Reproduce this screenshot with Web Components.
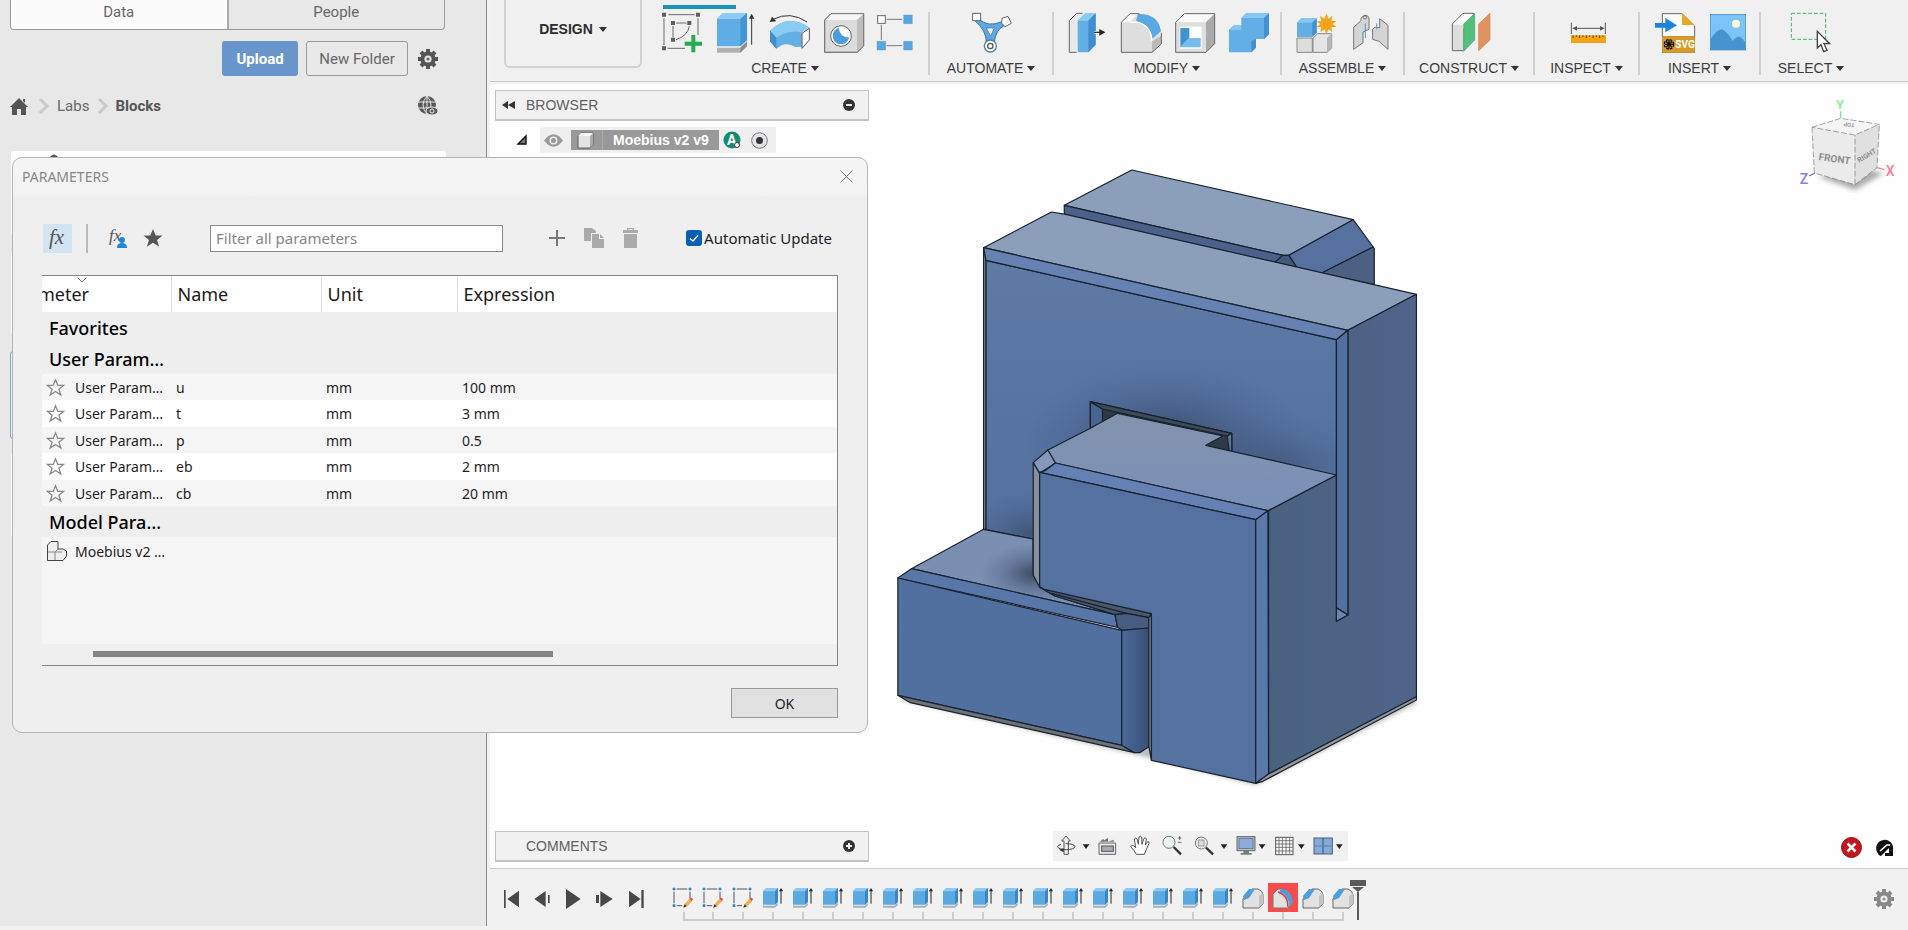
<!DOCTYPE html>
<html lang="en">
<head>
<meta charset="utf-8">
<title>Moebius v2 v9</title>
<style>
  body { margin: 0; background: #f1f1f1; font-family: "Liberation Sans", Arial, sans-serif; color: #333; }
</style>
</head>
<body>
<cad-app></cad-app>
<script>
const define = (name, html, setup) => customElements.define(name, class extends HTMLElement {
  connectedCallback() {
    if (this.shadowRoot) return;
    const root = this.attachShadow({ mode: 'open' });
    const t = document.createElement('template');
    t.innerHTML = typeof html === 'function' ? html(this) : html;
    root.append(t.content.cloneNode(true));
    if (setup) setup(this, root);
  }
});
const base = `<style>
  *{box-sizing:border-box}
  button{font:inherit;color:inherit;background:none;border:0;padding:0;margin:0;display:block}
  svg{display:block;overflow:visible}
</style>`;

/* ---------- toolbar icons, drawn on a grid of three units per pixel ---------- */
const icons = {
  sketch: ['540 36', `<g stroke="#6a6a6a" stroke-width="3" fill="none"><path d="M562 44H640M549 55V135M651 55V105M560 145H612M585 69H617M576 78V112M625 78Q620 108 585 119"/></g>
    <g fill="#5f5f5f"><path d="M543 38h12v12h-12zM645 38h12v12h-12zM543 139h12v12h-12zM570 63h12v12h-12zM619 63h12v12h-12zM570 113h12v12h-12z"/></g>
    <path d="M631 105h12v20h20v12h-20v20h-12v-20h-20v-12h20z" fill="#25ab50"/>`],
  extrude: ['702 36', `<path d="M708 57L726 39H798V120L778 139H708Z" fill="#5fade4"/><path d="M708 57L726 39H798L778 57Z" fill="#8cccf5"/><path d="M778 57L798 39V120L778 139Z" fill="#4296d6"/>
    <path d="M708 143H778L798 124V138L778 158H708Z" fill="#b1b1b1"/><path d="M778 143L798 124V138L778 158Z" fill="#8e8e8e"/><path d="M812 134V50" stroke="#333" stroke-width="3"/><path d="M804 56L812 41L820 56Z" fill="#333"/>`],
  revolve: ['864 36', `<path d="M867 92Q920 40 984 82L962 97V140L944 141Q920 128 902 136L886 146L867 124Z" fill="#62aee5"/><path d="M867 92Q920 40 984 82L962 97Q925 88 886 113Z" fill="#8acbf5"/><path d="M867 92L886 113V146L867 124Z" fill="#3f8fce"/>
    <path d="M963 100L985 85V120L963 145Z" fill="#fff" stroke="#555" stroke-width="3"/><path d="M876 58Q928 32 978 66" fill="none" stroke="#333" stroke-width="3"/><path d="M866 66L873 50L886 64Z" fill="#333"/>`],
  hole: ['1026 36', `<path d="M1031 60L1050 41H1148V138L1128 157H1031Z" fill="#dcdcdc" stroke="#777" stroke-width="3"/><path d="M1031 60L1050 41H1148L1128 60Z" fill="#f6f6f6"/><path d="M1128 60L1148 41V138L1128 157Z" fill="#bdbdbd"/><path d="M1031 60L1050 41H1148V138L1128 157H1031Z" fill="none" stroke="#777" stroke-width="3"/>
    <circle cx="1080" cy="108" r="31" fill="#fff" stroke="#666" stroke-width="3"/><circle cx="1080" cy="108" r="25" fill="#4b9ddc"/><path d="M1080 83A25 25 0 0 1 1105 112Q1078 114 1073 84Z" fill="#fff"/>`],
  pattern: ['1188 36', `<path d="M1217 58H1264M1201 74V120M1217 137H1264" stroke="#777" stroke-width="3"/><rect x="1190" y="47" width="23" height="23" fill="#fff" stroke="#666" stroke-width="3"/><path d="M1268 45h26v26h-26zM1188 124h26v26h-26zM1268 124h26v26h-26z" fill="#5aa6de" stroke="#4b8fc4" stroke-width="1"/>`],
  automate: ['210 36', `<path d="M234 58Q262 82 300 66L308 78Q284 90 280 126L256 126Q256 92 222 62Z" fill="#5fa8e0" stroke="#3f74a0" stroke-width="3"/><path d="M256 84H280L269 108Z" fill="#f4f4f4" stroke="#3f74a0" stroke-width="2"/>
    <rect x="215" y="40" width="24" height="22" fill="#fff" stroke="#666" stroke-width="3"/><path d="M303 55L321 49L331 70L312 80L302 70Z" fill="#fff" stroke="#666" stroke-width="3"/><circle cx="268" cy="138" r="18" fill="#fff" stroke="#4e7fa8" stroke-width="4"/><circle cx="268" cy="138" r="8" fill="none" stroke="#555" stroke-width="4"/>`],
  press: ['495 36', `<path d="M530 157H508V62L530 40H548" fill="#e9e9e9" stroke="#666" stroke-width="3"/><path d="M533 62L556 40H587V134L565 157H533Z" fill="#62aee5"/><path d="M533 62L556 40H587L565 62Z" fill="#8acbf5"/><path d="M565 62L587 40V134L565 157Z" fill="#3d8fd0"/><path d="M582 97H600" stroke="#fff" stroke-width="8"/><path d="M582 97H602" stroke="#333" stroke-width="4"/><path d="M598 87L616 97L598 107Z" fill="#222"/>`],
  fillet: ['657 36', `<path d="M664 67L690 41H718L784 108V132L756 157H664Z" fill="#dedede"/><path d="M664 67L690 41H714L690 67Z" fill="#f8f8f8"/><path d="M756 124L784 108V132L756 157Z" fill="#bbb"/><path d="M714 42Q775 40 783 94L757 116Q754 76 708 62Z" fill="#5aa9e2"/><path d="M718 41H690L664 67V157H756L784 132V98" fill="none" stroke="#666" stroke-width="3"/><path d="M690 67Q750 62 756 122" fill="none" stroke="#fff" stroke-width="4"/>`],
  shell: ['819 36', `<path d="M827 67L853 41H944V131L918 157H827Z" fill="#dedede"/><path d="M827 67L853 41H944L918 67Z" fill="#fafafa"/><path d="M918 67L944 41V131L918 157Z" fill="#aaa"/><path d="M827 67L853 41H944V131L918 157H827Z" fill="none" stroke="#666" stroke-width="3"/><rect x="839" y="80" width="66" height="66" fill="#fff"/><path d="M841 84H868V114L841 142Z" fill="#4093d2"/><path d="M868 114H902V142H841Z" fill="#74bdee"/>`],
  combine: ['981 36', `<path d="M987 90L1001 76H1024V54L1038 40H1107V102L1092 117H1068V143L1054 157H987Z" fill="#62aee5"/><path d="M1024 54L1038 40H1107L1092 54ZM987 90L1001 76H1024V90Z" fill="#85c7f3"/><path d="M1092 54L1107 40V102L1092 117ZM1054 122L1068 117V143L1054 157Z" fill="#3f91d2"/>`],
  component: ['1182 36', `<path d="M1188 114H1234V157H1188Z" fill="#ddd" stroke="#888" stroke-width="3"/><path d="M1236 114L1250 101H1292V144L1278 157H1236Z" fill="#e4e4e4" stroke="#888" stroke-width="3"/><path d="M1278 114L1292 101V144L1278 157Z" fill="#b5b5b5"/><path d="M1188 68L1201 55H1247V98L1234 111H1188Z" fill="#62aee5"/><path d="M1188 68L1201 55H1247L1234 68Z" fill="#85c7f3"/><path d="M1234 68L1247 55V98L1234 111Z" fill="#3f91d2"/>
    <path d="M1277 40l5 16 13-9-4 16 16 0-12 9 12 9-16 0 3 15-12-8-6 15-5-15-13 8 3-15-15 0 12-9-12-8 15 0-4-16 13 8z" fill="#f4a21a"/>`],
  joint: ['1344 36', `<g fill="#d4d4d4" stroke="#777" stroke-width="3"><path d="M1358 82L1380 62V55Q1392 38 1404 52V88L1386 96V128L1358 148Z"/><path d="M1461 76L1436 56V84Q1420 78 1415 88V118L1434 124L1461 148Z"/></g><circle cx="1392" cy="52" r="5" fill="none" stroke="#555" stroke-width="2"/><path d="M1393 70V114M1427 70V88" stroke="#4b98d8" stroke-width="3"/>`],
  construct: ['174 36', `<path d="M184 72L216 40H248V50L216 90V152H184Z" fill="#fafafa" stroke="#666" stroke-width="3"/><path d="M186 74H216V150H186Z" fill="#ddd"/><path d="M218 72L251 40V120L218 154Z" fill="#52c07c" stroke="#48a86c" stroke-width="2"/><path d="M263 72L297 40V120L263 152Z" fill="#e2925f" stroke="#cf8252" stroke-width="2"/>`],
  measure: ['525 36', `<path d="M541 68V102M643 68V102M548 85H636" stroke="#555" stroke-width="3"/><path d="M544 85l14-7v14zM641 85l-14-7v14z" fill="#555"/><rect x="540" y="106" width="105" height="23" fill="#f2a413"/><path d="M546 106v8M556 106v5M566 106v8M576 106v5M586 106v8M596 106v5M606 106v8M616 106v5M626 106v8M636 106v5" stroke="#5d420c" stroke-width="3"/>`],
  svgfile: ['783 36', `<path d="M814 110V41H873L911 78V110" fill="#fafafa" stroke="#666" stroke-width="3"/><path d="M873 39V75H911Z" fill="#e9a728"/><rect x="814" y="109" width="97" height="49" fill="#d69a2b" stroke="#b78120" stroke-width="2"/><path d="M792 69H823V54L858 76L823 97V83H792Z" fill="#1a85de"/>
    <g fill="none" stroke="#111" stroke-width="4"><circle cx="834" cy="133" r="14" stroke-dasharray="8 3"/><path d="M834 120V146M821 133H847M825 124L843 142M843 124L825 142"/></g><text x="853" y="145" font-family="Roboto,sans-serif" font-weight="700" font-size="30" fill="#fff">SVG</text>`],
  image: ['945 36', `<rect x="958" y="43" width="106" height="107" fill="#7cc4f7" stroke="#3f88c0" stroke-width="2"/><circle cx="1035" cy="71" r="12" fill="#fdf8d0"/><path d="M958 118Q980 86 992 88Q1006 92 1025 122Q1040 108 1046 110Q1056 116 1064 128V150H958Z" fill="#4694cf"/>`],
  select: ['1197 36', `<rect x="1201" y="40" width="103" height="78" fill="none" stroke="#3db56a" stroke-width="3" stroke-dasharray="11 6"/><path d="M1279 94V144L1290 134L1298 155L1308 151L1299 131H1316Z" fill="#fff" stroke="#444" stroke-width="4"/>`]
};

define('tool-group', el => `${base}<style>
  :host{display:flex;flex-direction:column;align-items:center;border-right:2px solid #d0d0d0;height:63px}
  :host([last]){border-color:transparent}
  .icons{display:flex;gap:12px;height:42px;padding-left:var(--lead,0)}
  .cap{display:flex;align-items:center;gap:4px;font-size:14px;line-height:16px;margin-top:6px;color:#3c3c3c}
  .cap::after{content:"";border:4px solid transparent;border-top:5px solid #333;border-bottom:0}
</style><div class="icons">${el.getAttribute('icons').split(' ').map(n =>
  `<button aria-label="${n}"><svg width="42" height="42" viewBox="${icons[n][0]} 126 126">${icons[n][1]}</svg></button>`).join('')}</div>
<button class="cap"><slot></slot></button>`);

define('tool-bar', `${base}<style>
  :host{display:flex;height:85px;background:linear-gradient(#f0f0f0 0 81px,#c8c8c8 81px 82px,#f3f3f3 82px)}
  .mode{margin-left:14px;width:138px;height:68px;border:2px solid #d2d2d2;border-top:0;border-radius:0 0 6px 6px;font-weight:700;font-size:14px;display:flex;align-items:center;justify-content:center;gap:6px;color:#2d2d2d;padding-bottom:8px}
  .mode::after{content:"";border:4px solid transparent;border-top:5px solid #333;border-bottom:0}
  .tabs{height:12px;padding:5px 0 0 21px}
  .tabs i{display:block;width:73px;height:4px;background:#1b93bd}
  .groups{display:flex}
</style>
<button class="mode">DESIGN</button>
<div><div class="tabs"><i></i></div><div class="groups">
<tool-group style="width:288px;--lead:9px" icons="sketch extrude revolve hole pattern">CREATE</tool-group>
<tool-group style="width:124px;--lead:2px" icons="automate">AUTOMATE</tool-group>
<tool-group style="width:228px" icons="press fillet shell combine">MODIFY</tool-group>
<tool-group style="width:123px" icons="component joint">ASSEMBLE</tool-group>
<tool-group style="width:130px;--lead:2px" icons="construct">CONSTRUCT</tool-group>
<tool-group style="width:105px" icons="measure">INSPECT</tool-group>
<tool-group style="width:121px" icons="svgfile image">INSERT</tool-group>
<tool-group style="width:102px" last icons="select">SELECT</tool-group>
</div></div>`);

const gear = (s, c) => `<svg width="${s}" height="${s}" viewBox="0 0 20 20"><circle cx="10" cy="10" r="5.6" fill="none" stroke="${c}" stroke-width="4"/><circle cx="10" cy="10" r="1.6" fill="${c}" opacity=".9"/><path d="M10 0v4M10 16v4M0 10h4M16 10h4M3 3l3 3M14 14l3 3M3 17l3-3M14 6l3-3" stroke="${c}" stroke-width="4"/></svg>`;

define('data-panel', `${base}<style>
  :host{display:block;background:#e8e8e8;border-right:1px solid #8c8c8c;font-family:Roboto,"Liberation Sans",sans-serif;font-size:15px;color:#666;margin-bottom:4px;padding:0 41px 0 10px}
  .tabs{display:flex;height:30px;border:1px solid #999;border-top:0;border-radius:0 0 4px 4px;overflow:hidden}
  .tabs button{flex:1;padding-bottom:6px}
  .tabs button:first-child{background:#fbfbfb;border-right:2px solid #aaa}
  .actions{display:flex;justify-content:flex-end;align-items:center;gap:8px;margin-top:11px;height:35px;padding-right:7px}
  .actions button:nth-child(-n+2){height:35px;border-radius:3px}
  .up{width:76px;background:#6896ca;color:#fff;font-weight:700}
  .new{width:102px;border:1px solid #999}
  .gear{margin-left:2px}
  nav{display:flex;align-items:center;height:24px;margin-top:18px;padding-right:7px}
  nav a{color:inherit;text-decoration:none}
  nav a:first-child{margin-right:10px}
  nav a.l{margin:0 8px}
  nav b{margin-left:7px;color:#555}
  nav button{margin-left:auto}
  .cards{margin:33px 0 0 1px}
  .card{height:84px;background:#fdfdfd;border-radius:3px;margin:0 -1px 16px 0}
  .card.sel{border:1px solid #8aa5c6;background:#eef3f8;height:88px;margin:0 -1px 14px -1px}
  .card svg{margin-left:38px}
</style>
<div class="tabs"><button>Data</button><button>People</button></div>
<div class="actions"><button class="up">Upload</button><button class="new">New Folder</button><button class="gear" aria-label="Settings">${gear(20,'#555')}</button></div>
<nav><a href="#" aria-label="Home"><svg width="18" height="18" viewBox="0 0 18 18"><path d="M9 1L18 10H16V18H11V12H7V18H2V10H0ZM13 2h2v4l-2-2z" fill="#555"/></svg></a>
<svg width="11" height="16" viewBox="0 0 11 16"><path d="M2 1L9 8L2 15" fill="none" stroke="#c9c9c9" stroke-width="3"/></svg><a class="l" href="#">Labs</a>
<svg width="11" height="16" viewBox="0 0 11 16"><path d="M2 1L9 8L2 15" fill="none" stroke="#c9c9c9" stroke-width="3"/></svg><b>Blocks</b>
<button aria-label="Open on the web"><svg width="20" height="20" viewBox="0 0 20 20"><circle cx="9" cy="9" r="9" fill="#5a5a5a"/><path d="M9 0V18M0 6H18M0 12H18M9 0Q1 9 9 18M9 0Q17 9 9 18" stroke="#e8e8e8" fill="none"/><ellipse cx="14" cy="15" rx="6" ry="4" fill="#5a5a5a" stroke="#e8e8e8"/><circle cx="14" cy="15" r="2" fill="#555" stroke="#eee"/></svg></button></nav>
<div class="cards"><div class="card"><svg width="10" height="7" viewBox="0 0 10 7"><path d="M0 7Q5 0 10 7Z" fill="#555"/></svg></div><div class="card"></div><div class="card sel"></div><div class="card"></div></div>`);

define('panel-header', `${base}<style>
  :host{display:flex;align-items:center;height:31px;background:#f1f1f1;border:1px solid #c3c3c3;border-bottom-width:2px;font-size:14px;color:#5f5f5f;padding:0 13px 0 6px}
  .lead{width:24px}.end{margin-left:auto}
</style><span class="lead"><slot name="lead"></slot></span><span><slot></slot></span><button class="end" aria-label="Toggle"><slot name="end"></slot></button>`);

define('browser-panel', `${base}<style>
  :host{display:block}
  .row{display:flex;align-items:center;height:26px;margin:6px 0 0 22px}
  .body{display:flex;align-items:center;height:26px;background:#efefef;margin-left:13px;width:236px}
  .name{display:flex;align-items:center;width:148px;height:20px;background:#999;color:#fff;font-weight:700;font-size:14px;margin-left:8px}
  .name svg{margin:0 8px 0 6px}
  .name span{border-left:1px solid #aaa;padding-left:10px;line-height:20px;white-space:nowrap}
  .a{margin:0 10px 0 4px}
</style>
<panel-header><svg slot="lead" width="13" height="8" viewBox="0 0 13 8"><path d="M6 0V8L0 4ZM13 0V8L6 4Z" fill="#333"/></svg>BROWSER<svg slot="end" width="12" height="12" viewBox="0 0 12 12"><circle cx="6" cy="6" r="6" fill="#333"/><path d="M3 6H9" stroke="#eee" stroke-width="2"/></svg></panel-header>
<div class="row"><svg width="10" height="10" viewBox="0 0 10 10"><path d="M1 9L9 1V9Z" fill="#777" stroke="#111" stroke-width="1.4"/></svg>
<div class="body"><svg style="margin-left:4px" width="19" height="13" viewBox="0 0 19 13"><path d="M0 6.500Q9.500-6 19 6.500Q9.500 19 0 6.500Z" fill="#9a9a9a"/><circle cx="9.500" cy="6.500" r="3.300" fill="none" stroke="#eee" stroke-width="1.500"/></svg>
<div class="name"><svg width="17" height="17" viewBox="0 0 17 17"><path d="M1 4L4 1H16V13L13 16H1Z" fill="#e4e4e4" stroke="#5f5f5f"/><path d="M13 4L16 1V13L13 16Z" fill="#aaa"/><path d="M1 4L4 1H16L13 4Z" fill="#f8f8f8"/></svg><span>Moebius v2 v9</span></div>
<svg class="a" width="18" height="18" viewBox="0 0 18 18"><circle cx="9" cy="9" r="8.500" fill="#158a72"/><text x="4" y="14" font-family="Roboto,sans-serif" font-weight="700" font-size="14" fill="#fff">A</text><circle cx="14" cy="14" r="2.500" fill="#fff" stroke="#333"/></svg>
<svg width="17" height="17" viewBox="0 0 17 17"><circle cx="8.500" cy="8.500" r="7.800" fill="#e3e3ea" stroke="#777"/><circle cx="8.500" cy="8.500" r="3.500" fill="#333"/></svg></div></div>`);

/* ---------- 3D model ---------- */
define('model-view', `${base}<style>:host{display:block}svg{width:100%;height:100%}
.e{stroke:#17222f;stroke-width:1.2px;stroke-linejoin:round}.e *{vector-effect:non-scaling-stroke}</style>
<svg viewBox="490 85 1418 783" role="img" aria-label="Model of interlocking blocks">
<defs>
<linearGradient id="f" x1="0" y1="0" x2="0" y2="1"><stop offset="0" stop-color="#5f7aa3"/><stop offset=".5" stop-color="#5774a3"/><stop offset="1" stop-color="#54719f"/></linearGradient>
<linearGradient id="r" x1="0" y1="0" x2="1" y2="0"><stop offset="0" stop-color="#49627f"/><stop offset="1" stop-color="#50648a"/></linearGradient>
<linearGradient id="d" x1="0" y1="0" x2="1" y2="0"><stop offset="0" stop-color="#4a6a9b"/><stop offset="1" stop-color="#385075"/></linearGradient>
<linearGradient id="t" x1="0" y1="0" x2="0" y2="1"><stop offset="0" stop-color="#8393ad"/><stop offset="1" stop-color="#7890b8"/></linearGradient>
<radialGradient id="s"><stop offset="0" stop-color="#27303f" stop-opacity=".85"/><stop offset=".5" stop-color="#2d3d58" stop-opacity=".35"/><stop offset="1" stop-color="#3a5078" stop-opacity="0"/></radialGradient>
<clipPath id="cf"><path d="M297 331L1278 569V975L428 1167L297 1139Z"/></clipPath>
<clipPath id="ct"><path d="M290 1138L428 1167V1275L447 1312L490 1338L661 1395L88 1256Z"/></clipPath>
<filter id="b" x="-10%" y="-10%" width="120%" height="120%"><feGaussianBlur stdDeviation="6"/></filter>
</defs>
<g class="e" transform="translate(880 150) scale(.357143 .333333)">
<path d="M60 1650L760 1825L1052 1905L1502 1660L1490 1625L760 1780L60 1640Z" fill="#bbb" stroke="none" filter="url(#b)"/>
<path d="M705 60L1325 209L1145 316H1128L516 166Z" fill="#8b9fba"/>
<path d="M516 166L1128 316L1105 337L520 195L516 190Z" fill="#4c618a"/>
<path d="M1128 316H1145L1168 353L1105 337Z" fill="#445a7c"/>
<path d="M1145 316L1325 209L1381 291L1237 369L1168 353Z" fill="#5671a0"/>
<path d="M1381 291L1384 296V404L1237 369Z" fill="#4c6083"/>
<path d="M480 186L520 193L1502 433L1310 541L290 293Z" fill="#8b9fba"/>
<path d="M290 293L297 331V1139L290 1137Z" fill="#85878a"/>
<path d="M297 331L1278 569V975L428 1167L297 1139Z" fill="url(#f)"/>
<g clip-path="url(#cf)" stroke="none"><ellipse cx="800" cy="880" rx="400" ry="240" fill="url(#s)" opacity=".75"/><ellipse cx="1120" cy="940" rx="300" ry="150" fill="url(#s)" opacity=".35"/><ellipse cx="420" cy="1150" rx="180" ry="130" fill="url(#s)" opacity=".5"/></g>
<path d="M290 293L1310 541L1278 569L297 331Z" fill="#6682b3"/>
<path d="M1310 541L1502 433V1640L1088 1872V1082L1278 975V1414L1310 1395Z" fill="url(#r)"/>
<path d="M1278 569L1310 541V1395L1278 1373Z" fill="#5271a0"/>
<path d="M1278 1373L1310 1395L1278 1414Z" fill="#6b84b0"/>
<path d="M589 755L985 850V905L589 835Z" fill="#2f3947"/>
<path d="M589 755L623 777V820L589 835Z" fill="#48648f"/>
<path d="M589 755L985 850L972 858L623 777Z" fill="#3e4a5b"/>
<path d="M972 858L985 850V905L978 903Z" fill="#5a7396"/>
<path d="M665 790L960 858L912 886L1278 975L1086 1082L491 939L470 900L589 835Z" fill="url(#t)"/>
<path d="M470 900L491 939L447 970L429 938Z" fill="#8799bb"/>
<path d="M429 938L447 970V1315L429 1275Z" fill="#898f9b"/>
<path d="M491 939L1086 1082L1052 1109L447 967L462 962Z" fill="#6581b3"/>
<path d="M290 1138L428 1167V1275L447 1312L490 1338L661 1395L88 1256Z" fill="#7b8fb2"/>
<g clip-path="url(#ct)" stroke="none"><ellipse cx="440" cy="1270" rx="160" ry="90" fill="url(#s)" opacity=".9"/></g>
<path d="M88 1256L658 1394L665 1432L50 1284Z" fill="#5877a9"/>
<path d="M447 1312L760 1391L753 1403L690 1390L658 1394L490 1338Z" fill="#4a576c"/>
<path d="M480 1330L690 1390" fill="none"/>
<path d="M658 1394L690 1390L753 1403V1434L677 1441L665 1432Z" fill="#465c80"/>
<path d="M50 1284L677 1441V1786L50 1636Z" fill="#52709f"/>
<path d="M50 1636L677 1786L713 1808L85 1658Z" fill="#6d7178"/>
<path d="M677 1441L753 1434V1790L727 1808H713L677 1786Z" fill="url(#d)"/>
<path d="M753 1403L760 1391V1831L753 1790Z" fill="#909398"/>
<path d="M447 967L1052 1109V1900L760 1831V1391L460 1318L447 1310Z" fill="#55719f"/>
<path d="M1052 1109L1086 1082L1088 1872L1052 1900Z" fill="#5b78aa"/>
<path d="M1052 1900L1088 1872L1502 1640V1650L1072 1894Z" fill="#97989b"/>
</g></svg>`);

define('view-cube', `${base}<style>:host{display:block;width:100px;height:97px}text{font-family:Roboto,sans-serif}</style>
<svg width="100" height="97" viewBox="1221 291 300 291"><defs><filter id="b"><feGaussianBlur stdDeviation="8"/></filter></defs>
<path d="M1285 530L1395 570L1480 520L1400 500Z" fill="#aaa" filter="url(#b)"/>
<path d="M1266 382L1352 355L1468 373L1395 405Z" fill="#f5f5f5"/><path d="M1266 382L1395 405V554L1273 519Z" fill="#ebebeb"/><path d="M1395 405L1468 373L1461 503L1395 554Z" fill="#e0e0e0"/>
<path d="M1266 382L1352 355L1468 373L1395 405ZM1266 382L1273 519L1395 554V405M1395 554L1461 503L1468 373" fill="none" stroke="#777" stroke-width="2" stroke-dasharray="18 6"/>
<path d="M1352 355V334" stroke="#7be98c" stroke-width="4"/><path d="M1275 519L1257 528" stroke="#6666dd" stroke-width="4"/><path d="M1461 503L1483 509" stroke="#f58a98" stroke-width="4"/>
<g font-weight="500"><text x="1338" y="328" font-size="39" fill="#7dee8f">Y</text><text x="1229" y="552" font-size="42" fill="#8080ee">Z</text><text x="1487" y="527" font-size="42" fill="#f57f8e">X</text></g>
<text transform="translate(1285 480) rotate(8)" font-size="30" font-weight="700" fill="#8e8e8e">FRONT</text>
<text transform="translate(1407 488) rotate(-30)" font-size="21" font-weight="700" fill="#8e8e8e">RIGHT</text>
<text transform="translate(1394 370) rotate(187)" font-size="17" font-weight="700" fill="#999">TOP</text></svg>`);

const caret = x => `<path d="M${x} 130h20l-10 14z" fill="#222"/>`;
const nav = [
  ['Orbit', 40, 39, `<path d="M73 160V120H66L79 105L92 120H86V160Z" fill="#eee" stroke="#555" stroke-width="3"/><ellipse cx="80" cy="137" rx="26" ry="9" fill="none" stroke="#444" stroke-width="3" stroke-dasharray="70 14"/><path d="M58 146l14-4v12z" fill="#333"/>${caret(129)}`],
  ['Look at', 157, 31, `<path d="M178 126H228V160H178Z" fill="#e8e8e8" stroke="#666" stroke-width="3"/><rect x="186" y="135" width="35" height="16" fill="#aab" stroke="#555" stroke-width="3"/><path d="M180 122L190 114L194 118L205 110V122L222 116V122Z" fill="#777"/>`],
  ['Pan', 250, 33, `<path d="M290 160Q284 148 274 138Q272 130 283 135L288 140L284 114Q288 108 292 114L296 130L298 108Q303 103 306 108L307 130L313 112Q318 108 320 114L317 132L324 122Q329 121 328 127L318 150L314 160Z" fill="#fff" stroke="#555" stroke-width="3"/>`],
  ['Zoom', 349, 33, `<circle cx="388" cy="124" r="18" fill="#e9f1f1" stroke="#777" stroke-width="3"/><path d="M402 138L424 160" stroke="#333" stroke-width="7"/><path d="M414 111H426M420 105V117M414 124H426" stroke="#333" stroke-width="2"/>`],
  ['Fit', 448, 43, `<circle cx="485" cy="126" r="18" fill="#eef3f3" stroke="#777" stroke-width="3"/><rect x="477" y="117" width="16" height="18" fill="#ddd" stroke="#777" stroke-width="2"/><path d="M499 140L520 160" stroke="#333" stroke-width="7"/>${caret(543)}`],
  ['Display', 577, 38, `<rect x="592" y="107" width="54" height="42" fill="#bbb" stroke="#666" stroke-width="3"/><rect x="598" y="113" width="42" height="30" fill="#8eabdc" stroke="#4b6593" stroke-width="2"/><path d="M611 150H628V156H636V161H603V156H611Z" fill="#687"/>${caret(657)}`],
  ['Grid', 691, 39, `<rect x="708" y="109" width="52" height="52" fill="#fafafa" stroke="#555" stroke-width="3"/><path d="M708 119H760M708 129H760M708 139H760M708 150H760M718 109V161M728 109V161M739 109V161M750 109V161" stroke="#666" stroke-width="2.500"/>${caret(775)}`],
  ['Viewports', 808, 39, `<rect x="823" y="111" width="55" height="48" fill="#86aad8" stroke="#4c5f7c" stroke-width="3"/><path d="M850 111V159" stroke="#33507c" stroke-width="3"/><path d="M825 135H848M853 135H876" stroke="#5e80b4" stroke-width="3"/>${caret(889)}`]
];
define('nav-bar', `${base}<style>:host{display:flex;background:#f1f1f1;height:30px}</style>` + nav.map(([n, x, w, s]) =>
  `<button aria-label="${n}"><svg width="${w}" height="30" viewBox="${x} 90 ${w * 3} 90">${s}</svg></button>`).join(''));

define('work-space', `${base}<style>
  :host{display:grid;position:relative;background:#fefefe;grid-template:auto 1fr auto / 374px 1fr 374px;padding:5px 5px 6px;min-height:783px}
  model-view{position:absolute;inset:0}
  browser-panel,.cube,.comments,nav-bar,.status{z-index:1}
  .cube{grid-column:3;justify-self:end;margin:7px 6px 0 0}
  .comments{grid-area:3/1}
  nav-bar{grid-area:3/2;justify-self:center;align-self:start;margin-left:3px}
  .status{grid-area:3/3;justify-self:end;display:flex;gap:14px;align-items:center;padding:2px 9px 0 0}
</style>
<model-view></model-view><browser-panel></browser-panel><view-cube class="cube"></view-cube>
<panel-header class="comments">COMMENTS<svg slot="end" width="12" height="12" viewBox="0 0 12 12"><circle cx="6" cy="6" r="6" fill="#333"/><path d="M3 6H9M6 3V9" stroke="#eee" stroke-width="2"/></svg></panel-header>
<nav-bar></nav-bar>
<div class="status"><svg width="21" height="21" viewBox="0 0 21 21"><circle cx="10.500" cy="10.500" r="10" fill="#c4161c" stroke="#8d1015"/><path d="M6.500 6.500L14.500 14.500M14.500 6.500L6.500 14.500" stroke="#fff" stroke-width="2.600"/></svg>
<svg width="18" height="18" viewBox="0 0 18 18"><path d="M1 13A8.500 8.500 0 1 1 17 11V17H9V14H13V9L5 17Q2 16 1 13Z" fill="#111"/><path d="M4 12L11 6H14" stroke="#fff" stroke-width="1.600" fill="none"/></svg></div>`);

/* ---------- timeline ---------- */
const feat = {
  sk: ['Sketch', '564 729 90 87', `<path d="M590 747H622M582 755V790M630 755V775M590 797H606" stroke="#555" stroke-width="3"/><path d="M578 743h8v8h-8zM626 743h8v8h-8zM578 793h8v8h-8z" fill="#2f86cc"/><path d="M610 803L614 792L628 776L636 784L622 799Z" fill="#f3b04c"/><path d="M610 803L614 793L620 799Z" fill="#333"/><path d="M628 776Q636 770 639 778L635 784Z" fill="#ec4747"/>`],
  ex: ['Extrude', '834 729 90 87', `<path d="M849 754L859 744H894V785L885 794H849Z" fill="#5ba9e0"/><path d="M849 754L859 744H894L885 754Z" fill="#8bc9f2"/><path d="M885 754L894 744V785L885 794Z" fill="#3b86c4"/><path d="M849 797H885L894 788V795L885 803H849Z" fill="#a5b0b8"/><path d="M903 791V750" stroke="#222" stroke-width="3"/><path d="M897 754L903 744L909 754Z" fill="#222"/>`],
  ch: ['Chamfer', '0 0 30 29', `<path d="M5 16L14 6H20Q25 8 25 12V21L21 25H5Z" fill="#e2e2e2" stroke="#666"/><path d="M5 13L11 6H17L11 15L6 17Z" fill="#4f9edb"/><path d="M21 13L25 10V21L21 25Z" fill="#c4c4c4"/>`],
  fi: ['Fillet', '0 0 30 29', `<path d="M5 11L10 6H14Q24 8 24 18V21L20 25H5Z" fill="#e2e2e2" stroke="#777"/><path d="M13 6Q24 7 25 20L21 23Q21 12 11 9Z" fill="#4f9edb"/><path d="M10 9Q20 12 20 24" stroke="#e33" fill="none" stroke-width="1.500"/>`]
};
const seq = [...Array(3).fill('sk'), ...Array(16).fill('ex'), 'ch', 'fi', 'ch', 'ch'];
const play = [['To start', 60, 26, 'M72 750H77V804H72ZM117 752V802L82 777Z'], ['Step back', 138, 32, 'M163 777L197 753V801ZM204 765H209V789H204Z'], ['Play', 234, 30, 'M258 747L302 777L258 807Z'], ['Step forward', 324, 32, 'M348 765H357V789H348ZM361 753L398 777L361 801Z'], ['To end', 420, 32, 'M447 752L482 777L447 802ZM484 750H491V804H484Z']];
define('time-line', `${base}<style>
  :host{display:flex;align-items:flex-start;height:62px;background:#f1f1f1;border-top:1px solid #ccc;padding:14px 14px 0 10px}
  .play{display:flex;margin-top:2px}
  ol{display:flex;list-style:none;margin:0 0 0 16px;padding:0;position:relative}
  li{width:30px}
  li.hot button{background:#fb4a4a}
  li::after{content:"";display:block;height:7px;border-bottom:2px solid #ccc;background:linear-gradient(#ccc,#ccc) center/2px 100% no-repeat}
  li:first-child::after{margin-left:15px;background-position:left}
  li:nth-last-child(2)::after{margin-right:14px;background-position:right}
  .mark{position:absolute;right:-8px;top:-3px;width:16px}
  li.mark::after{display:none}
  .gear{margin:6px 0 0 auto}
</style><div class="play">${play.map(([n, x, w, d]) => `<button aria-label="${n}"><svg width="${w}" height="28" viewBox="${x} 735 ${w * 3} 84"><path d="${d}" fill="#484848"/></svg></button>`).join('')}</div>
<ol>${seq.map(k => `<li${k === 'fi' ? ' class="hot"' : ''}><button aria-label="${feat[k][0]}"><svg width="30" height="29" viewBox="${feat[k][1]}">${feat[k][2]}</svg></button></li>`).join('')}
<li class="mark"><svg width="16" height="40" viewBox="0 0 16 40"><path d="M0 0H16V6H0ZM2 7H14L8 12ZM7 12H9V40H7Z" fill="#5a5a5a"/></svg></li></ol>
<button class="gear" aria-label="Timeline settings">${gear(20,'#888')}</button>`);

/* ---------- parameters dialog ---------- */
const star = (s, f, k) => `<svg width="${s}" height="${s}" viewBox="0 0 20 20"><path d="M10 1L12.700 7.500H19.500L14 12L16.200 18.800L10 14.800L3.800 18.800L6 12L.500 7.500H7.300Z" fill="${f}" stroke="${k}" stroke-width="1.500"/></svg>`;
const rows = [['u','100 mm'],['t','3 mm'],['p','0.5'],['eb','2 mm'],['cb','20 mm']];
define('parameters-dialog', `${base}<style>
  :host{display:block;width:856px;background:linear-gradient(#f5f5f5 0,#f2f2f2 38px,#efefef 39px);border:1px solid #b4b4b4;border-radius:10px;font-family:"Noto Sans","Open Sans",sans-serif;font-size:14px;color:#1e1e1e;padding:0 29px 14px 29px}
  header{display:flex;justify-content:space-between;align-items:center;height:36px;margin:0 -15px 0 -20px;color:#888}
  h2{font-size:14px;font-weight:400;margin:0}
  .bar{display:flex;align-items:center;height:30px;margin:29px 0 22px 1px;font-size:15px}
  .fx{width:29px;height:29px;background:#d2e4f2}
  .sep{width:2px;height:29px;background:#bbb;margin:0 18px 0 14px}
  .star{margin:0 47px 0 15px}
  input[type=text]{width:293px;height:27px;border:1px solid #8a8a8a;background:#fff;padding:0 5px;font:inherit;border-radius:0;outline:0}
  input::placeholder{color:#858585;opacity:1}
  .plus{margin-left:46px}.copy{margin-left:19px}.trash{margin-left:18px}
  label{display:flex;align-items:center;gap:2px;margin-left:auto;margin-right:6px;white-space:nowrap}
  input[type=checkbox]{appearance:none;width:16px;height:16px;margin:0;border-radius:3px;background:#0a5fb4 url('data:image/svg+xml,<svg xmlns="http://www.w3.org/2000/svg" viewBox="0 0 16 16"><path d="M4 8.500L7 11L12 5.500" fill="none" stroke="white" stroke-width="1.300"/></svg>')}
  .frame{border:1px solid #858585;border-left:0;height:391px;display:flex;flex-direction:column;background:#f5f5f5}
  table{width:100%;table-layout:fixed;border-collapse:collapse;text-align:left}
  th,td{padding:0;font-weight:400;white-space:nowrap}
  thead th{height:36px;background:#fff;font-size:18px;border-right:1px solid #ddd;padding-left:6px;color:#1a1a1a}
  thead th:last-child{border:0}
  thead th:first-child{padding:0;background:#fff url('data:image/svg+xml,<svg xmlns="http://www.w3.org/2000/svg" width="10" height="6"><path d="M0.500 0.500L5 5L9.500 0.500" fill="none" stroke="gray"/></svg>') 35px 1px no-repeat}
  .cut{width:47px;display:flex;justify-content:flex-end;overflow:hidden}
  .grp th{height:31px;background:#eee;font-size:18px;font-weight:500;padding-left:7px;color:#000}
  .row td{height:26px}
  .row:nth-child(even) td{background:#fff;height:27px}
  .row td:nth-child(n+2){padding-left:5px}
  .row.last td{height:28px}
  .row td:first-child div{display:flex;align-items:center;gap:11px;padding-left:5px}
  .row.last td div{gap:8px}
  .track{margin-top:auto;height:21px;background:#efefef;padding:7px 0 0 51px}
  .track i{display:block;width:460px;height:6px;background:#858585}
  .ok{width:107px;height:30px;border:1px solid #999;background:#e1e1e1;margin:22px 0 0 auto}
</style>
<header><h2>PARAMETERS</h2><button aria-label="Close"><svg width="13" height="13" viewBox="0 0 13 13"><path d="M.500 .500L12.500 12.500M12.500 .500L.500 12.500" stroke="#777"/></svg></button></header>
<div class="bar">
<button class="fx" aria-label="All parameters"><svg width="29" height="29" viewBox="0 0 29 29"><text x="6" y="20" font-family="Liberation Serif,serif" font-style="italic" font-size="21" fill="#555">fx</text></svg></button><span class="sep"></span>
<button aria-label="User parameters"><svg width="22" height="22" viewBox="0 0 22 22"><text x="3" y="14" font-family="Liberation Serif,serif" font-style="italic" font-size="17" fill="#555">fx</text><circle cx="16" cy="13" r="3" fill="#1e88d8"/><path d="M11 21Q11 16 16 16Q21 16 21 21Z" fill="#1e88d8"/></svg></button>
<button class="star" aria-label="Favorites">${star(20,'#555','none')}</button>
<input type="text" placeholder="Filter all parameters" aria-label="Filter all parameters">
<button class="plus" aria-label="Add"><svg width="16" height="16" viewBox="0 0 16 16"><path d="M8 0V16M0 8H16" stroke="#777" stroke-width="2"/></svg></button>
<button class="copy" aria-label="Copy"><svg width="21" height="20" viewBox="0 0 21 20"><path d="M0 0H8V4H12V3L8 0M0 0V13H7V5H12V3H8V0Z" fill="#aaa"/><path d="M8 6H15V11H20V20H8ZM16 6L20 10H16Z" fill="#aaa"/></svg></button>
<button class="trash" aria-label="Delete"><svg width="15" height="20" viewBox="0 0 15 20"><path d="M4 0H11V2H15V5H0V2H4ZM1 6H14V20H1Z" fill="#aaa"/><path d="M5.500 1.500H9.500" stroke="#eee"/></svg></button>
<label><input type="checkbox" checked>Automatic Update</label></div>
<div class="frame"><table><colgroup><col style="width:129px"><col style="width:150px"><col style="width:136px"><col></colgroup>
<thead><tr><th><div class="cut">Parameter</div></th><th>Name</th><th>Unit</th><th>Expression</th></tr></thead>
<tbody><tr class="grp"><th colspan="4">Favorites</th></tr></tbody>
<tbody><tr class="grp"><th colspan="4">User Param…</th></tr></tbody>
<tbody>${rows.map(([n, e]) => `<tr class="row"><td><div>${star(17,'none','#888')}User Param…</div></td><td>${n}</td><td>mm</td><td>${e}</td></tr>`).join('')}</tbody>
<tbody><tr class="grp"><th colspan="4">Model Para…</th></tr></tbody>
<tbody><tr class="row last"><td colspan="4"><div><svg width="20" height="20" viewBox="0 0 20 20"><path d="M.500 4L4 .500H11V8H16L19.500 10V15L16 19.500H.500Z" fill="#eee" stroke="#444"/><path d="M8 19V11L11 8M1 11H8M8 11H15" stroke="#888" fill="none"/></svg>Moebius v2 …</div></td></tr></tbody></table>
<div class="track"><i></i></div></div>
<button class="ok">OK</button>`);

define('cad-app', `${base}<style>
  :host{display:grid;grid-template-columns:487px 1fr;column-gap:3px;min-height:100vh;position:relative;background:#f1f1f1}
  main{display:flex;flex-direction:column;min-width:0}
  work-space{flex:1}
  parameters-dialog{position:absolute;left:12px;top:157px;z-index:5}
</style><data-panel></data-panel><main><tool-bar></tool-bar><work-space></work-space><time-line></time-line></main><parameters-dialog></parameters-dialog>`);
</script>
</body>
</html>
